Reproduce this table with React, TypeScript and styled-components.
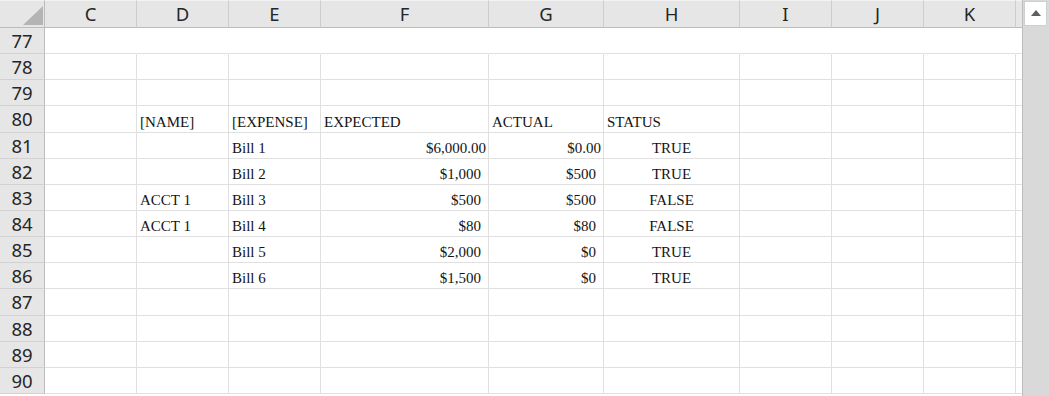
import React from 'react';
import styled, { createGlobalStyle } from 'styled-components';

const GlobalStyle = createGlobalStyle`
	html, body {
		margin: 0;
		padding: 0;
		background: #ffffff;
		overflow: hidden;
	}
`;

const COLUMNS = [
	{ name: 'C', width: 92 },
	{ name: 'D', width: 92 },
	{ name: 'E', width: 92 },
	{ name: 'F', width: 168 },
	{ name: 'G', width: 115 },
	{ name: 'H', width: 136 },
	{ name: 'I', width: 92 },
	{ name: 'J', width: 92 },
	{ name: 'K', width: 92 },
	{ name: 'L', width: 92 },
];

type Align = 'left' | 'right' | 'center';

interface CellData {
	text: string;
	align?: Align;
	pad?: number;
}

// row number -> column letter -> cell
const DATA: Record<number, Record<string, CellData>> = {
	80: {
		D: { text: '[NAME]' },
		E: { text: '[EXPENSE]' },
		F: { text: 'EXPECTED' },
		G: { text: 'ACTUAL' },
		H: { text: 'STATUS' },
	},
	81: {
		E: { text: 'Bill 1' },
		F: { text: '$6,000.00', align: 'right', pad: 2 },
		G: { text: '$0.00', align: 'right', pad: 2 },
		H: { text: 'TRUE', align: 'center' },
	},
	82: {
		E: { text: 'Bill 2' },
		F: { text: '$1,000', align: 'right', pad: 7 },
		G: { text: '$500', align: 'right', pad: 7 },
		H: { text: 'TRUE', align: 'center' },
	},
	83: {
		D: { text: 'ACCT 1' },
		E: { text: 'Bill 3' },
		F: { text: '$500', align: 'right', pad: 7 },
		G: { text: '$500', align: 'right', pad: 7 },
		H: { text: 'FALSE', align: 'center' },
	},
	84: {
		D: { text: 'ACCT 1' },
		E: { text: 'Bill 4' },
		F: { text: '$80', align: 'right', pad: 7 },
		G: { text: '$80', align: 'right', pad: 7 },
		H: { text: 'FALSE', align: 'center' },
	},
	85: {
		E: { text: 'Bill 5' },
		F: { text: '$2,000', align: 'right', pad: 7 },
		G: { text: '$0', align: 'right', pad: 7 },
		H: { text: 'TRUE', align: 'center' },
	},
	86: {
		E: { text: 'Bill 6' },
		F: { text: '$1,500', align: 'right', pad: 7 },
		G: { text: '$0', align: 'right', pad: 7 },
		H: { text: 'TRUE', align: 'center' },
	},
};

const ROWS = Array.from({ length: 14 }, (_, i) => 77 + i);

const justifyMap: Record<Align, string> = {
	left: 'flex-start',
	right: 'flex-end',
	center: 'center',
};

const Styled = {
	Window: styled.div`
		display: flex;
		width: 1049px;
		height: 396px;
		overflow: hidden;
		background: #ffffff;
	`,
	SheetArea: styled.div`
		flex: 1;
		overflow: hidden;
	`,
	Grid: styled.div`
		display: grid;
		grid-template-columns: 45px ${COLUMNS.map(c => `${c.width}px`).join(' ')};
		grid-template-rows: 28px repeat(14, 26.15px);
		width: max-content;
	`,
	Corner: styled.div`
		position: relative;
		background: #e6e6e6;
		border-right: 1px solid #bcbcbc;
		border-bottom: 1px solid #bcbcbc;
		border-top: 1px solid #f2f2f2;
		box-sizing: border-box;
	`,
	CornerTriangle: styled.div`
		position: absolute;
		right: 1px;
		bottom: 2px;
		width: 0;
		height: 0;
		border-left: 20px solid transparent;
		border-bottom: 19px solid #b4b4b4;
	`,
	ColumnHeader: styled.div`
		display: flex;
		align-items: center;
		justify-content: center;
		background: #e6e6e6;
		border-right: 1px solid #cdcdcd;
		border-bottom: 1px solid #bcbcbc;
		border-top: 1px solid #f2f2f2;
		box-sizing: border-box;
		font-family: 'Noto Sans', 'Open Sans', sans-serif;
		font-size: 18.5px;
		color: #262626;
		padding-bottom: 2px;
	`,
	RowHeader: styled.div`
		display: flex;
		align-items: center;
		justify-content: center;
		background: #e6e6e6;
		border-right: 1px solid #bcbcbc;
		border-bottom: 1px solid #d2d2d2;
		box-sizing: border-box;
		font-family: 'Noto Sans', 'Open Sans', sans-serif;
		font-size: 18.5px;
		color: #262626;
	`,
	Cell: styled.div<{ $blank?: boolean; $align: Align; $pad: number }>`
		display: flex;
		align-items: flex-end;
		justify-content: ${props => justifyMap[props.$align]};
		padding: 0 ${props => props.$pad}px 1px 3px;
		border-right: 1px solid ${props => (props.$blank ? 'transparent' : '#e0e0e0')};
		border-bottom: 1px solid #e0e0e0;
		box-sizing: border-box;
		overflow: hidden;
		white-space: nowrap;
		font-family: 'Liberation Serif', 'Times New Roman', serif;
		font-size: 15px;
		line-height: 17px;
		color: #141414;
	`,
	Scrollbar: styled.div`
		display: flex;
		flex-direction: column;
		width: 27px;
		background: #d9d9d9;
		border-left: 1px solid #bdbdbd;
		box-sizing: border-box;
		padding: 1px 2px 0 1px;
	`,
	ArrowButton: styled.div`
		display: flex;
		align-items: center;
		justify-content: center;
		height: 25px;
		background: #ffffff;
		border: 1px solid #cfcfcf;
		box-sizing: border-box;
	`,
	ArrowUp: styled.div`
		width: 0;
		height: 0;
		border-left: 5px solid transparent;
		border-right: 5px solid transparent;
		border-bottom: 6px solid #5f5f5f;
		margin-bottom: 2px;
	`,
};

const App = () => {
	return (
		<>
			<GlobalStyle />
			<Styled.Window>
				<Styled.SheetArea>
					<Styled.Grid>
						<Styled.Corner>
							<Styled.CornerTriangle />
						</Styled.Corner>
						{COLUMNS.map(col => (
							<Styled.ColumnHeader key={col.name}>{col.name === 'L' ? '' : col.name}</Styled.ColumnHeader>
						))}
						{ROWS.map(row => (
							<React.Fragment key={row}>
								<Styled.RowHeader>{row}</Styled.RowHeader>
								{COLUMNS.map(col => {
									const cell = DATA[row]?.[col.name];
									return (
										<Styled.Cell
											key={col.name}
											$blank={row === 77}
											$align={cell?.align ?? 'left'}
											$pad={cell?.pad ?? 3}
										>
											{cell?.text}
										</Styled.Cell>
									);
								})}
							</React.Fragment>
						))}
					</Styled.Grid>
				</Styled.SheetArea>
				<Styled.Scrollbar>
					<Styled.ArrowButton>
						<Styled.ArrowUp />
					</Styled.ArrowButton>
				</Styled.Scrollbar>
			</Styled.Window>
		</>
	);
};

export default App;
